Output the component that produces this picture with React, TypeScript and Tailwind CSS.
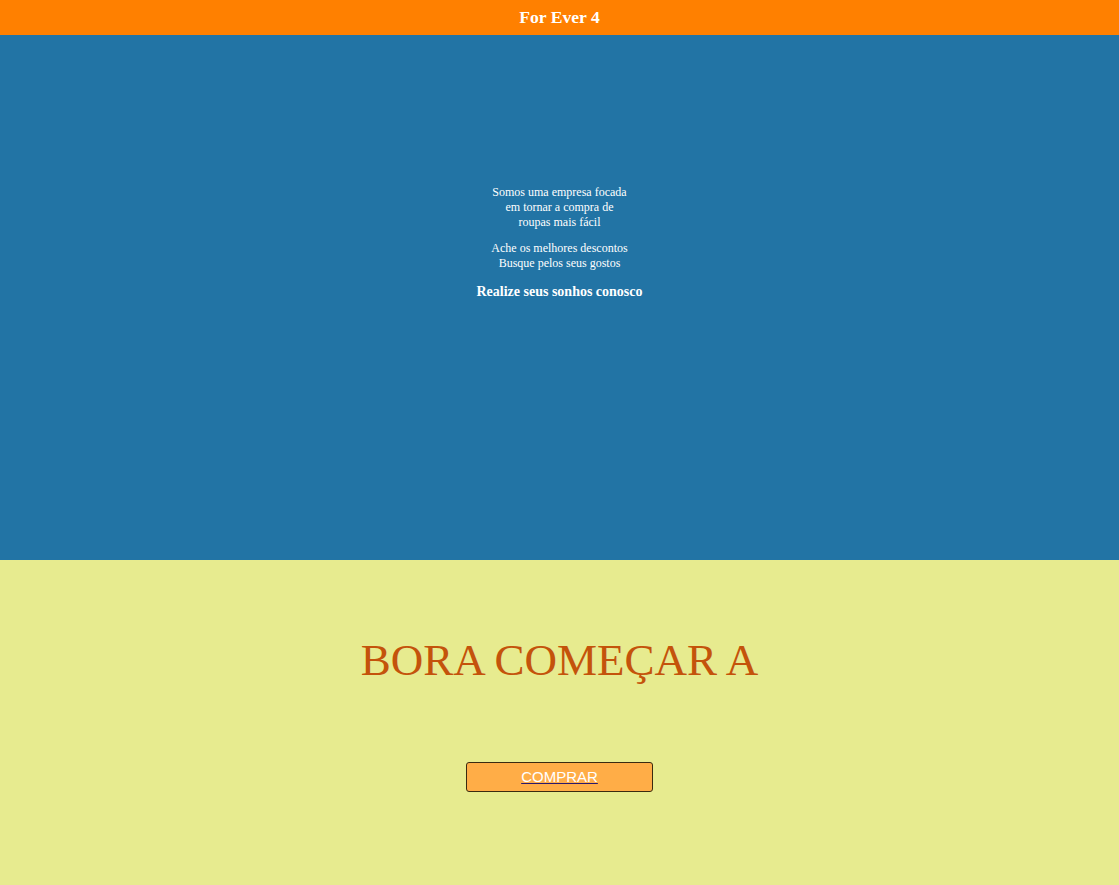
export default function App() {
  return (
    <div className="min-h-[885px] flex flex-col" style={{ fontFamily: '"Liberation Serif", serif' }}>
      <header className="h-[35px] bg-[#ff8000] flex items-center justify-center">
        <h1 className="text-[17.6px] font-bold text-white leading-none">For Ever 4</h1>
      </header>
      <section className="h-[525px] bg-[#2274a5] flex flex-col items-center pt-[150px] text-white text-center">
        <p className="text-[12px] leading-[15px]">
          Somos uma empresa focada<br />em tornar a compra de<br />roupas mais fácil
        </p>
        <p className="text-[12px] leading-[15px] mt-[11px]">
          Ache os melhores descontos<br />Busque pelos seus gostos
        </p>
        <p className="text-[14px] leading-[16px] font-bold mt-[13px]">Realize seus sonhos conosco</p>
      </section>
      <section className="flex-1 bg-[#e7eb8f] flex flex-col items-center pt-[73px]">
        <h2 className="text-[45px] leading-[54px] text-[#c4530b]">BORA COMEÇAR A</h2>
        <a
          href="#"
          className="mt-[75px] w-[187px] h-[30px] bg-[#ffad47] border border-[#3a2a10] rounded-[3px] flex items-center justify-center text-white text-[15px] underline decoration-[#2a1a6e]"
          style={{ fontFamily: '"Liberation Sans", Arial, sans-serif' }}
        >
          COMPRAR
        </a>
      </section>
    </div>
  );
}
